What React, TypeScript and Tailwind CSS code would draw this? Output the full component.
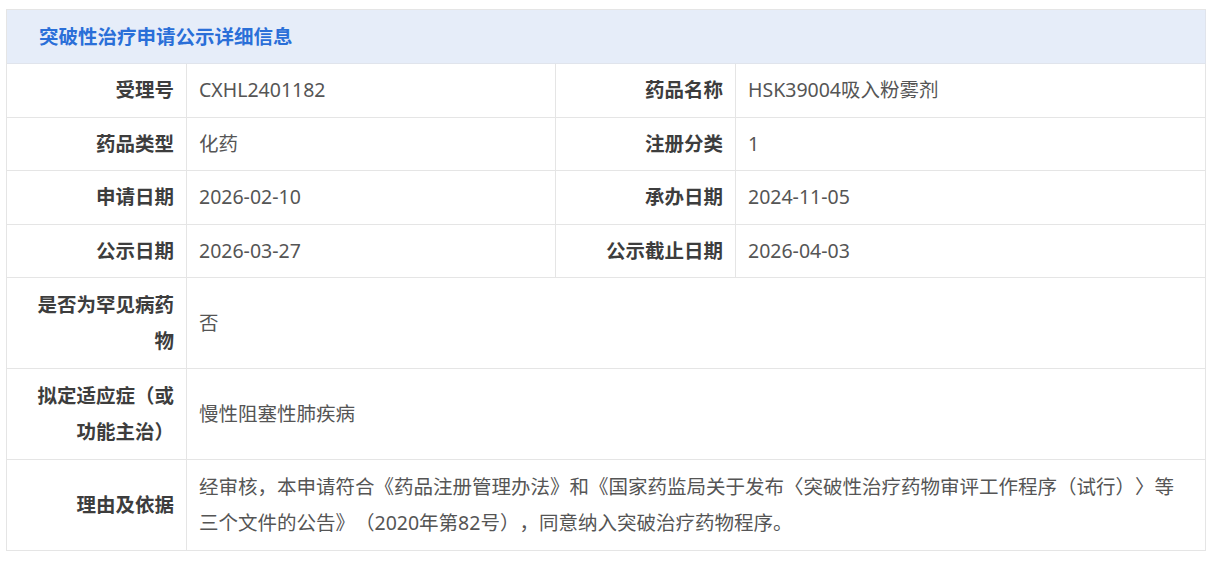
const rows: [string, string, string, string][] = [
  ["受理号", "CXHL2401182", "药品名称", "HSK39004吸入粉雾剂"],
  ["药品类型", "化药", "注册分类", "1"],
  ["申请日期", "2026-02-10", "承办日期", "2024-11-05"],
  ["公示日期", "2026-03-27", "公示截止日期", "2026-04-03"],
];

const wide: [string, string][] = [
  ["是否为罕见病药物", "否"],
  ["拟定适应症（或功能主治）", "慢性阻塞性肺疾病"],
  [
    "理由及依据",
    "经审核，本申请符合《药品注册管理办法》和《国家药监局关于发布〈突破性治疗药物审评工作程序（试行）〉等三个文件的公告》（2020年第82号），同意纳入突破治疗药物程序。",
  ],
];

const labelCls =
  "flex items-center justify-end text-right font-bold text-[#3d3d3d] pl-[15px] pr-[12px] py-[8.25px] border-r border-b border-[#e5e5e5]";
const valueCls =
  "flex items-center text-[#555555] pl-[12px] pr-[13px] py-[8.25px] border-r border-b border-[#e5e5e5]";

export default function App() {
  return (
    <div
      className="bg-white min-h-screen pt-[9px] pl-[6px] text-[19.5px] leading-[36px] [text-spacing-trim:space-all]"
      style={{ fontFamily: '"Noto Sans", "Noto Sans CJK SC", sans-serif' }}
    >
      <div className="w-[1200px] border-l border-t border-[#e5e5e5]">
        <div className="h-[54px] flex items-center pl-[32px] bg-[#e6edf9] border-r border-b border-[#e0e4ec] text-[#2a6fd8] font-bold">
          突破性治疗申请公示详细信息
        </div>
        <div className="grid grid-cols-[180px_369px_180px_1fr]">
          {rows.map(([l1, v1, l2, v2]) => (
            <div key={l1} className="contents">
              <div className={labelCls}>{l1}</div>
              <div className={valueCls}>{v1}</div>
              <div className={labelCls}>{l2}</div>
              <div className={valueCls}>{v2}</div>
            </div>
          ))}
          {wide.map(([l, v]) => (
            <div key={l} className="contents">
              <div className={labelCls + " min-h-[91px]"}>{l}</div>
              <div className={valueCls + " col-span-3"}>{v}</div>
            </div>
          ))}
        </div>
      </div>
    </div>
  );
}
